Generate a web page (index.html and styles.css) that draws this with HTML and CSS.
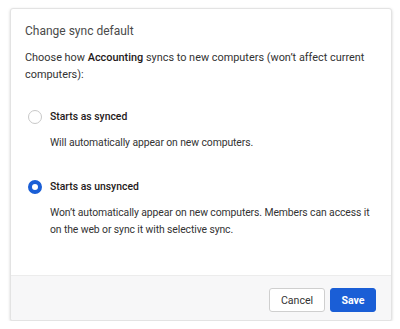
FILE: index.html
```html
<!DOCTYPE html>
<html lang="en">
<head>
    <meta charset="UTF-8">
    <title>Change sync default</title>
    <link rel="stylesheet" href="styles.css">
</head>
<body>

    <div class="dialog">
        <div class="dialog-body">
            <h2 class="dialog-title">Change sync default</h2>
            <p class="intro">Choose how <b>Accounting</b> syncs to new computers (won’t affect current computers):</p>

            <label class="option">
                <span class="radio"></span>
                <span class="option-text">
                    <span class="option-title">Starts as synced</span>
                    <span class="option-desc">Will automatically appear on new computers.</span>
                </span>
            </label>

            <label class="option">
                <span class="radio checked"></span>
                <span class="option-text">
                    <span class="option-title">Starts as unsynced</span>
                    <span class="option-desc">Won’t automatically appear on new computers. Members can access it<br>on the web or sync it with selective sync.</span>
                </span>
            </label>
        </div>

        <div class="dialog-footer">
            <button class="btn btn-secondary">Cancel</button>
            <button class="btn btn-primary">Save</button>
        </div>
    </div>

</body>
</html>
```

FILE: styles.css
```css
body {
    font-family: Roboto, "Noto Sans", sans-serif;
    background-color: #ffffff;
    color: #1e1919;
    margin: 0;
    padding: 8px 8px 0 10px;
}

.dialog {
    width: 380px;
    border: 1px solid #e3e3e3;
    border-radius: 3px;
    box-shadow: 0 1px 3px rgba(0, 0, 0, 0.18);
    background-color: #fff;
    overflow: hidden;
}

.dialog-body {
    padding: 12px 15px 37px 14px;
}

.dialog-title {
    font-size: 12px;
    line-height: 20px;
    font-weight: 400;
    color: #4a4a4a;
    margin: 0 0 8px 0;
}

.intro {
    font-size: 10.9px;
    line-height: 17px;
    color: #333;
    margin: 0 0 25px 0;
}

.intro b {
    font-weight: 500;
    color: #1e1919;
}

.option {
    display: flex;
    gap: 8px;
    margin-bottom: 27px;
    margin-left: 3px;
}

.option:last-child {
    margin-bottom: 0;
}

.radio {
    flex: none;
    width: 14px;
    height: 14px;
    border: 1px solid #c8c8c8;
    border-radius: 50%;
    box-sizing: border-box;
    margin-top: 2px;
}

.radio.checked {
    border: 4px solid #1a5ed6;
}

.option-text {
    display: flex;
    flex-direction: column;
    gap: 9px;
}

.option-title {
    font-size: 10.4px;
    font-weight: 500;
    line-height: 17px;
}

.option-desc {
    font-size: 10.4px;
    line-height: 17px;
    color: #333;
    letter-spacing: -0.1px;
    white-space: nowrap;
}

.dialog-footer {
    display: flex;
    justify-content: flex-end;
    gap: 5px;
    padding: 12px 15px 8px;
    background-color: #f7f7f8;
    border-top: 1px solid #ececec;
}

.btn {
    font-family: Roboto, "Noto Sans", sans-serif;
    font-size: 10.6px;
    height: 24px;
    border-radius: 3px;
    cursor: pointer;
}

.btn-secondary {
    width: 56px;
    background-color: #fff;
    border: 1px solid #cfcfcf;
    color: #333;
}

.btn-primary {
    width: 46px;
    background-color: #1a5ed6;
    border: 1px solid #1a5ed6;
    color: #fff;
    font-weight: 700;
}
```
